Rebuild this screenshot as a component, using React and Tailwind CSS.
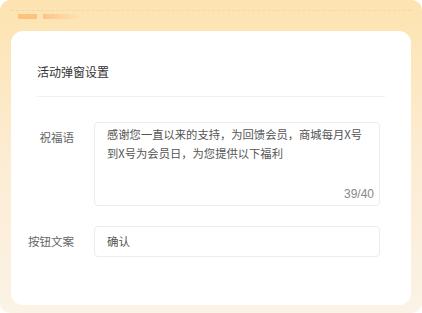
export default function App() {
    return (
        <div className="w-[422px] h-[313px] bg-white" style={{ fontFamily: '"Noto Sans CJK SC", "Noto Sans", sans-serif' }}>
            <div className="h-full rounded-[10px] bg-gradient-to-b from-[#fde3b0] via-[#fcecd2] to-[#fbf3e6] px-[11px] pt-[10px] flex flex-col">
                {/* decorative dotted line + bars */}
                <div className="h-px w-full border-t border-dashed border-[#f6d7a4]" />
                <div className="flex items-center gap-[6px] pl-[7px] mt-[3px] h-[5px]">
                    <div className="w-[19px] h-[5px] bg-[#fdc27c]" />
                    <div className="w-[36px] h-[5px] bg-gradient-to-r from-[#fdc48a] to-[#fde3b0]" />
                </div>

                <div className="mt-[12px] h-[274px] bg-white rounded-[12px] px-[26px]">
                    <div className="h-[66px] pt-[33px] border-b border-[#f0f0f0] text-[12px] leading-[16px] text-[#333]">
                        活动弹窗设置
                    </div>

                    <div className="flex mt-[25px]">
                        <div className="w-[37px] text-right text-[11.5px] text-[#666] pt-[6px] leading-[18px] whitespace-nowrap">祝福语</div>
                        <div className="ml-[20px] w-[286px] h-[84px] border border-[#ececec] rounded-[4px] pl-[12px] pr-[8px] pt-[1px] relative">
                            <div className="text-[11.3px] text-[#555] leading-[19px] pt-[1px]">
                                感谢您一直以来的支持，为回馈会员，商城每月X号到X号为会员日，为您提供以下福利
                            </div>
                            <span className="absolute right-[5px] bottom-[5px] text-[12px] text-[#888] leading-none" style={{ fontFamily: '"Liberation Sans", sans-serif' }}>39/40</span>
                        </div>
                    </div>

                    <div className="flex items-center mt-[20px]">
                        <div className="w-[37px] text-right text-[11.5px] text-[#666] whitespace-nowrap flex justify-end">按钮文案</div>
                        <div className="ml-[20px] w-[286px] h-[31px] border border-[#ececec] rounded-[4px] px-[12px] flex items-center text-[11.5px] text-[#555]">
                            确认
                        </div>
                    </div>
                </div>
            </div>
        </div>
    )
}
